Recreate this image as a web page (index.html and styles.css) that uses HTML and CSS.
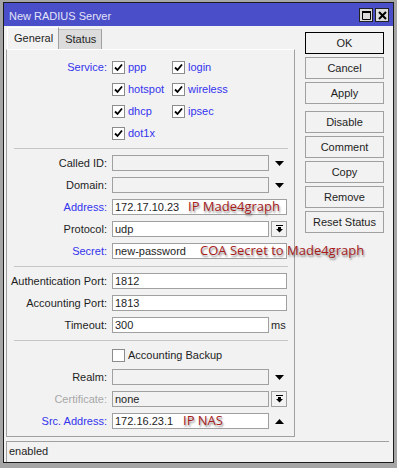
FILE: index.html
```html
<!DOCTYPE html>
<html lang="en">

<head>
    <meta charset="UTF-8">
    <title>New RADIUS Server</title>
    <link rel="stylesheet" href="styles.css">
</head>

<body>
    <div class="window">
        <div class="titlebar">
            <span class="title">New RADIUS Server</span>
            <div class="title-btns">
                <span class="tbtn">
                    <svg width="9" height="9" viewBox="0 0 9 9"><path d="M0.5 0.5h8v8h-8z M0 1.5h9" fill="none" stroke="#000" stroke-width="1"/><rect x="0" y="0" width="9" height="2" fill="#000"/></svg>
                </span>
                <span class="tbtn">
                    <svg width="9" height="9" viewBox="0 0 9 9"><path d="M1 1L8 8M8 1L1 8" stroke="#000" stroke-width="2"/></svg>
                </span>
            </div>
        </div>

        <div class="content">
            <div class="main">
                <div class="tabs">
                    <div class="tab active">General</div>
                    <div class="tab">Status</div>
                </div>

                <div class="panel">
                    <!-- services -->
                    <div class="services">
                        <div class="label blue">Service:</div>
                        <div class="check blue"><span class="box"><svg width="9" height="9" viewBox="0 0 9 9"><path d="M1 4.5L3.5 7L8 1.5" fill="none" stroke="#000" stroke-width="1.8"/></svg></span>ppp</div>
                        <div class="check blue"><span class="box"><svg width="9" height="9" viewBox="0 0 9 9"><path d="M1 4.5L3.5 7L8 1.5" fill="none" stroke="#000" stroke-width="1.8"/></svg></span>login</div>
                        <div class="check blue"><span class="box"><svg width="9" height="9" viewBox="0 0 9 9"><path d="M1 4.5L3.5 7L8 1.5" fill="none" stroke="#000" stroke-width="1.8"/></svg></span>hotspot</div>
                        <div class="check blue"><span class="box"><svg width="9" height="9" viewBox="0 0 9 9"><path d="M1 4.5L3.5 7L8 1.5" fill="none" stroke="#000" stroke-width="1.8"/></svg></span>wireless</div>
                        <div class="check blue"><span class="box"><svg width="9" height="9" viewBox="0 0 9 9"><path d="M1 4.5L3.5 7L8 1.5" fill="none" stroke="#000" stroke-width="1.8"/></svg></span>dhcp</div>
                        <div class="check blue"><span class="box"><svg width="9" height="9" viewBox="0 0 9 9"><path d="M1 4.5L3.5 7L8 1.5" fill="none" stroke="#000" stroke-width="1.8"/></svg></span>ipsec</div>
                        <div class="check blue"><span class="box"><svg width="9" height="9" viewBox="0 0 9 9"><path d="M1 4.5L3.5 7L8 1.5" fill="none" stroke="#000" stroke-width="1.8"/></svg></span>dot1x</div>
                    </div>

                    <div class="sep"></div>

                    <div class="form">
                        <div class="label">Called ID:</div>
                        <div class="field-wrap">
                            <div class="field ro"></div>
                            <span class="extra"><svg width="9" height="5" viewBox="0 0 9 5"><path d="M0 0H9L4.5 5z" fill="#000"/></svg></span>
                        </div>

                        <div class="label">Domain:</div>
                        <div class="field-wrap">
                            <div class="field ro"></div>
                            <span class="extra"><svg width="9" height="5" viewBox="0 0 9 5"><path d="M0 0H9L4.5 5z" fill="#000"/></svg></span>
                        </div>

                        <div class="label blue">Address:</div>
                        <div class="field-wrap">
                            <div class="field">172.17.10.23</div>
                            <span class="note note-address">IP Made4graph</span>
                        </div>

                        <div class="label">Protocol:</div>
                        <div class="field-wrap">
                            <div class="field">udp</div>
                            <span class="extra dd-btn"><svg width="7" height="8" viewBox="0 0 7 8"><rect x="0" y="0" width="7" height="1" fill="#000"/><rect x="2" y="2" width="3" height="2" fill="#000"/><path d="M0 4H7L3.5 7.5z" fill="#000"/></svg></span>
                        </div>

                        <div class="label blue">Secret:</div>
                        <div class="field-wrap">
                            <div class="field">new-password</div>
                            <span class="note note-secret">COA Secret to Made4graph</span>
                        </div>
                    </div>

                    <div class="sep"></div>

                    <div class="form">
                        <div class="label">Authentication Port:</div>
                        <div class="field-wrap">
                            <div class="field">1812</div>
                        </div>

                        <div class="label">Accounting Port:</div>
                        <div class="field-wrap">
                            <div class="field">1813</div>
                        </div>

                        <div class="label">Timeout:</div>
                        <div class="field-wrap">
                            <div class="field">300</div>
                            <span class="extra unit">ms</span>
                        </div>
                    </div>

                    <div class="sep"></div>

                    <div class="form">
                        <div class="label"></div>
                        <div class="check"><span class="box"></span>Accounting Backup</div>

                        <div class="label">Realm:</div>
                        <div class="field-wrap">
                            <div class="field ro"></div>
                            <span class="extra"><svg width="9" height="5" viewBox="0 0 9 5"><path d="M0 0H9L4.5 5z" fill="#000"/></svg></span>
                        </div>

                        <div class="label muted">Certificate:</div>
                        <div class="field-wrap">
                            <div class="field ro">none</div>
                            <span class="extra dd-btn"><svg width="7" height="8" viewBox="0 0 7 8"><rect x="0" y="0" width="7" height="1" fill="#000"/><rect x="2" y="2" width="3" height="2" fill="#000"/><path d="M0 4H7L3.5 7.5z" fill="#000"/></svg></span>
                        </div>

                        <div class="label blue">Src. Address:</div>
                        <div class="field-wrap">
                            <div class="field">172.16.23.1</div>
                            <span class="extra"><svg width="9" height="5" viewBox="0 0 9 5"><path d="M0 5H9L4.5 0z" fill="#000"/></svg></span>
                            <span class="note note-nas">IP NAS</span>
                        </div>
                    </div>
                </div>
            </div>

            <div class="buttons">
                <div class="btn default">OK</div>
                <div class="btn">Cancel</div>
                <div class="btn">Apply</div>
                <div class="btn group">Disable</div>
                <div class="btn">Comment</div>
                <div class="btn">Copy</div>
                <div class="btn">Remove</div>
                <div class="btn">Reset Status</div>
            </div>
        </div>

        <div class="statusbar">enabled</div>
    </div>
</body>

</html>
```

FILE: styles.css
```css
* {
    margin: 0;
    padding: 0;
    box-sizing: border-box;
}

body {
    background: #a6a6a6;
    font-family: 'Liberation Sans', Arial, sans-serif;
    font-size: 11px;
    color: #1e1e1e;
}

.window {
    margin: 2px 0 0 3px;
    width: 391px;
    height: 461px;
    border: 1px solid #1c1c1c;
    background: #f2f2f2;
}

/* title bar */
.titlebar {
    height: 23px;
    background: #4a4ec8;
    display: flex;
    justify-content: space-between;
    padding: 0 4px 0 5px;
}

.title {
    color: #e4e4fa;
    line-height: 20px;
    padding-top: 3px;
}

.title-btns {
    display: flex;
    gap: 2px;
    padding-top: 5px;
}

.tbtn {
    width: 14px;
    height: 14px;
    border: 1px solid #222;
    background: #dcdcdc;
    display: flex;
    align-items: center;
    justify-content: center;
}

/* body */
.content {
    display: grid;
    grid-template-columns: 289px 79px;
    column-gap: 10px;
    padding: 1px 0 0 2px;
}

.tabs {
    display: flex;
    align-items: flex-end;
    height: 22px;
    padding-left: 1px;
}

.tab {
    height: 20px;
    line-height: 19px;
    padding: 0 5px 0 6px;
    background: #dcdcdc;
    border-top: 1px solid #c4c4c4;
    border-right: 1px solid #a0a0a0;
}

.tab.active {
    height: 22px;
    line-height: 21px;
    background: #f2f2f2;
    border-top: 1px solid #fff;
    border-left: 1px solid #fff;
}

.panel {
    height: 388px;
    border: 1px solid #a0a0a0;
    border-top-color: #fff;
    padding: 9px 0 7px;
}

.sep {
    margin: 7px 6px 6px 7px;
    border-top: 1px solid #c6c6c6;
}

.label {
    text-align: right;
    line-height: 16px;
    white-space: nowrap;
}

.blue {
    color: #3434ee;
}

.muted {
    color: #a8a8a8;
}

.services {
    display: grid;
    grid-template-columns: 100px 55px 60px;
    grid-auto-rows: 16px;
    column-gap: 5px;
    row-gap: 6px;
}

.services .label {
    grid-row: 1 / span 4;
}

.check {
    display: flex;
    align-items: center;
    gap: 3px;
    line-height: 16px;
    white-space: nowrap;
}

.box {
    width: 13px;
    height: 13px;
    border: 1px solid #8c8c8c;
    background: #fff;
    display: flex;
    align-items: center;
    justify-content: center;
}

.form {
    display: grid;
    grid-template-columns: 100px 175px;
    grid-auto-rows: 16px;
    column-gap: 5px;
    row-gap: 6px;
}

.field-wrap {
    display: flex;
    gap: 2px;
    position: relative;
}

.field {
    flex: 1;
    height: 16px;
    border: 1px solid #a0a0a0;
    background: #fff;
    padding: 0 2px;
    line-height: 14px;
    white-space: nowrap;
}

.field.ro {
    background: #f2f2f2;
}

.extra {
    width: 16px;
    display: flex;
    align-items: center;
    justify-content: center;
}

.dd-btn {
    border: 1px solid #a0a0a0;
    background: #f2f2f2;
}

.unit {
    justify-content: flex-start;
    line-height: 16px;
}

/* red annotations on the screenshot */
.note {
    position: absolute;
    top: -3px;
    font-family: 'Open Sans', sans-serif;
    font-size: 13px;
    line-height: 20px;
    color: #a81c1c;
    text-shadow: 1px 2px 2px rgba(0, 0, 0, 0.45);
    white-space: nowrap;
}

.note-address {
    left: 76px;
}

.note-secret {
    left: 88px;
}

.note-nas {
    left: 71px;
}

/* right buttons */
.buttons {
    display: flex;
    flex-direction: column;
    gap: 3px;
    padding-top: 5px;
}

.btn {
    height: 22px;
    border: 1px solid #a0a0a0;
    background: #f2f2f2;
    text-align: center;
    line-height: 20px;
}

.btn.default {
    border-color: #000;
}

.btn.group {
    margin-top: 4px;
}

.statusbar {
    margin: 4px 4px 0 2px;
    height: 21px;
    border-top: 1px solid #a0a0a0;
    border-left: 1px solid #a0a0a0;
    padding-left: 2px;
    line-height: 19px;
}
```
